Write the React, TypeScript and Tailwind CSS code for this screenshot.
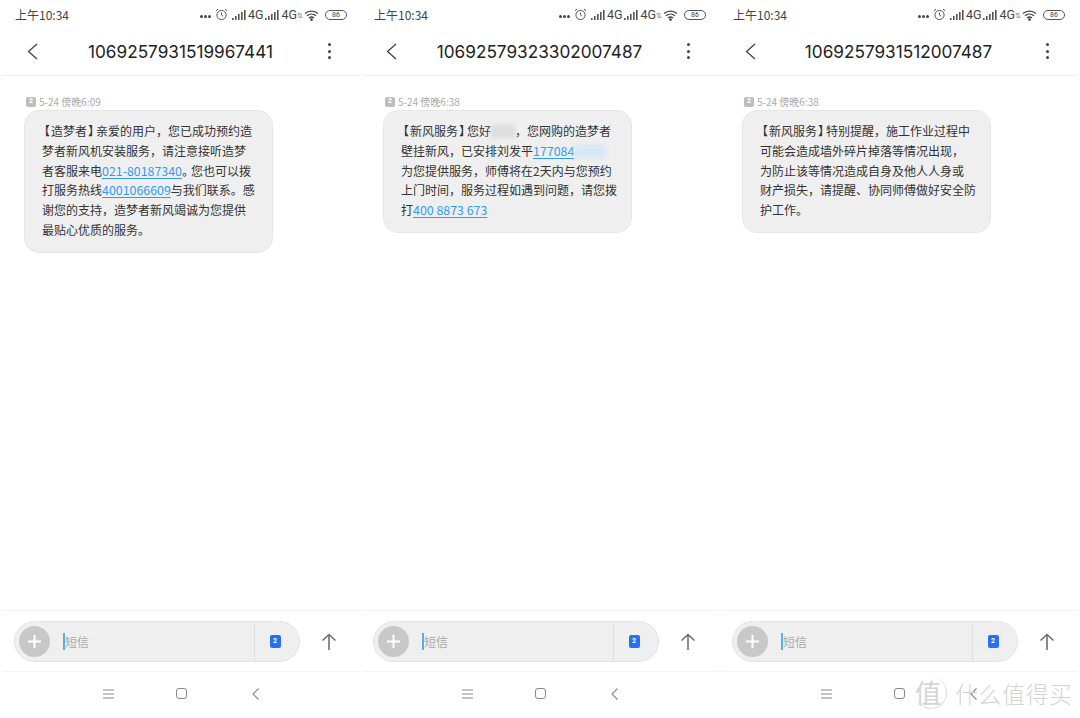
import type { ReactNode } from "react";

const cjk = "font-['Noto_Sans_CJK_SC','Noto_Sans',sans-serif]";

function Link({ children }: { children: ReactNode }) {
  return <span className="text-[12.4px] leading-none text-[#2f9bf5] underline underline-offset-2">{children}</span>;
}

// brackets sit narrower in the original font
function Tag({ children }: { children: ReactNode }) {
  return (
    <>
      <span className="ml-[2px] mr-[1px] [font-feature-settings:'halt']">【</span>
      {children}
      <span className="ml-[1px] mr-[2px] [font-feature-settings:'halt']">】</span>
    </>
  );
}

function Signal() {
  return (
    <svg width="15" height="10" viewBox="0 0 15 10" className="fill-[#555]">
      <rect x="0" y="8" width="1.6" height="2" />
      <rect x="3" y="6" width="1.6" height="4" />
      <rect x="6" y="4" width="1.6" height="6" />
      <rect x="9" y="2" width="1.6" height="8" />
      <rect x="12" y="0" width="1.6" height="10" />
    </svg>
  );
}

function StatusBar() {
  return (
    <div className="h-[30px] flex items-center justify-between pl-3 pr-[13px] text-[#444]">
      <span className={`text-[12px] ${cjk}`}>上午10:34</span>
      <div className="flex items-center">
        <span className="flex gap-[1.5px] mr-[4px] mt-[3px]">
          <i className="w-[2.5px] h-[2.5px] rounded-full bg-[#444]" />
          <i className="w-[2.5px] h-[2.5px] rounded-full bg-[#444]" />
          <i className="w-[2.5px] h-[2.5px] rounded-full bg-[#444]" />
        </span>
        <svg width="13" height="13" viewBox="0 0 13 13" fill="none" stroke="#555" strokeWidth="1" className="mr-[4px] -mt-[1px]">
          <circle cx="6.5" cy="7" r="4.6" />
          <path d="M6.5 4.5V7l1.6 1.2M1 2.8 3 1M12 2.8 10 1" />
        </svg>
        <Signal />
        <span className="text-[12.5px] font-['Roboto',sans-serif] ml-[1px] mr-[2px]">4G</span>
        <Signal />
        <span className="text-[12.5px] font-['Roboto',sans-serif] ml-[1px]">4G</span>
        <span className="text-[7px] leading-[7px] w-[5px] mr-[2px] text-[#777]">⇅</span>
        <svg width="16" height="11" viewBox="0 0 16 11" fill="none" stroke="#444" strokeWidth="1.3" className="mr-[5px]">
          <path d="M1 3.6C4.6.4 10.4.4 14 3.6M3 5.8c2.6-2.2 6.4-2.2 9 0M5 8c1.5-1.2 3.5-1.2 5 0" />
          <circle cx="7.5" cy="9.6" r=".7" fill="#444" />
        </svg>
        <span className="w-[22px] h-[10px] rounded-full border border-[#555] flex items-center justify-center text-[7px] font-['Roboto',sans-serif]">86</span>
      </div>
    </div>
  );
}

function TitleBar({ number }: { number: string }) {
  return (
    <div className="h-[46px] flex items-center border-b border-[#eeeeee] pb-[1px]">
      <div className="w-[48px] pl-6">
        <svg width="11" height="17" viewBox="0 0 11 17" fill="none" stroke="#444" strokeWidth="1.3" className="-mt-[2px]">
          <path d="M10 1 1.5 8.5 10 16" />
        </svg>
      </div>
      <div className="flex-1 text-center text-[17.2px] text-[#222] font-['Inter',sans-serif] -ml-[2px]">{number}</div>
      <div className="w-[48px] flex flex-col gap-[3.5px] items-center pr-[14px] -mt-[2px]">
        <i className="w-[3px] h-[3px] rounded-full bg-[#444]" />
        <i className="w-[3px] h-[3px] rounded-full bg-[#444]" />
        <i className="w-[3px] h-[3px] rounded-full bg-[#444]" />
      </div>
    </div>
  );
}

function Message({ time, children }: { time: string; children: ReactNode }) {
  return (
    <div className="pt-[19px] pl-[21px]">
      <div className="flex items-center h-[13px] pl-[2px] text-[10px] text-[#aaaaaa] gap-[3px]">
        <span className="w-[10px] h-[10px] rounded-[2px] bg-[#bdbdbd] text-white text-[7px] font-bold flex items-center justify-center font-['Roboto',sans-serif]">2</span>
        <span className={cjk}>{time}</span>
      </div>
      <div className={`mt-[2px] w-[249px] rounded-[15px] bg-[#efefef] border border-[#e6e6e6] pl-[17px] pr-2 pt-[10px] pb-[12px] text-[12px] leading-[19.8px] text-[#333] whitespace-nowrap ${cjk}`}>
        {children}
      </div>
    </div>
  );
}

function InputBar() {
  return (
    <div className="h-[62px] border-t border-b border-[#f4f4f4] flex items-center pl-[11px]">
      <div className="w-[286px] h-[41px] rounded-full bg-[#efefef] border border-[#e4e4e4] flex items-center">
        <span className="ml-[4px] w-[31px] h-[31px] rounded-full bg-[#c8c8c8] flex items-center justify-center">
          <svg width="15" height="15" viewBox="0 0 15 15" stroke="#fff" strokeWidth="2">
            <path d="M7.5 1v13M1 7.5h13" />
          </svg>
        </span>
        <span className="ml-[13px] w-[2px] h-[17px] bg-[#4db4e6]" />
        <span className={`text-[12px] text-[#aaaaaa] pt-[1px] ${cjk}`}>短信</span>
        <span className="flex-1" />
        <span className="h-full w-[45px] pr-[4px] border-l border-[#dedede] flex items-center justify-center">
          <span className="w-[11px] h-[13px] rounded-[2px] bg-[#2571f5] text-white text-[7px] font-bold flex items-center justify-center font-['Roboto',sans-serif]">2</span>
        </span>
      </div>
      <div className="ml-[21px]">
        <svg width="16" height="17" viewBox="0 0 16 17" fill="none" stroke="#707070" strokeWidth="1.6">
          <path d="M8 17V1.5M1.5 7.5 8 1.5l6.5 6" />
        </svg>
      </div>
    </div>
  );
}

function NavBar() {
  return (
    <div className="h-[46px] flex items-center pb-[3px] pl-[100px]">
      <svg width="11" height="10" viewBox="0 0 11 10" stroke="#888" strokeWidth="1.1">
        <path d="M0 1h11M0 5h11M0 9h11" />
      </svg>
      <span className="ml-[62px] w-[11px] h-[11px] rounded-[3px] border-[1.3px] border-[#888]" />
      <svg width="7" height="12" viewBox="0 0 7 12" fill="none" stroke="#888" strokeWidth="1.1" className="ml-[65px]">
        <path d="M6.5.5 1 6l5.5 5.5" />
      </svg>
    </div>
  );
}

function Phone({ number, time, children }: { number: string; time: string; children: ReactNode }) {
  return (
    <div className="w-[357px] h-[718px] flex flex-col bg-white">
      <StatusBar />
      <TitleBar number={number} />
      <div className="flex-1">
        <Message time={time}>{children}</Message>
      </div>
      <InputBar />
      <NavBar />
    </div>
  );
}

export default function App() {
  return (
    <div className="relative w-[1080px] h-[718px] overflow-hidden bg-white flex gap-[2px] pl-[3px]">
      <Phone number="1069257931519967441" time="5-24 傍晚6:09">
        <Tag>造梦者</Tag>亲爱的用户，您已成功预约造<br />
        梦者新风机安装服务，请注意接听造梦<br />
        者客服来电<Link>021-80187340</Link><span className="mr-[3px] [font-feature-settings:'halt']">。</span>您也可以拨<br />
        打服务热线<Link>4001066609</Link>与我们联系。感<br />
        谢您的支持，造梦者新风竭诚为您提供<br />
        最贴心优质的服务。
      </Phone>
      <Phone number="10692579323302007487" time="5-24 傍晚6:38">
        <Tag>新风服务</Tag>您好<span className="inline-block w-[24px] h-[13px] align-[-2px] bg-[#dddddd] blur-[2px]" />，您网购的造梦者<br />
        壁挂新风，已安排刘发平<Link>177084</Link><span className="inline-block w-[32px] h-[13px] align-[-2px] bg-[#d6e8f6] blur-[2px]" /><br />
        为您提供服务，师傅将在2天内与您预约<br />
        上门时间，服务过程如遇到问题，请您拨<br />
        打<Link>400 8873 673</Link>
      </Phone>
      <Phone number="1069257931512007487" time="5-24 傍晚6:38">
        <Tag>新风服务</Tag>特别提醒，施工作业过程中<br />
        可能会造成墙外碎片掉落等情况出现，<br />
        为防止该等情况造成自身及他人人身或<br />
        财产损失，请提醒、协同师傅做好安全防<br />
        护工作。
      </Phone>
      <div className={`absolute left-[915px] top-[677px] flex items-center text-[#d4d4d4] ${cjk}`}>
        <span className="w-[32px] h-[32px] rounded-full border-r border-b border-[#dddddd] text-[26px] leading-[30px]">值</span>
        <span className="ml-[8px] text-[23px] leading-[30px] tracking-[0.5px] font-light">什么值得买</span>
      </div>
    </div>
  );
}
